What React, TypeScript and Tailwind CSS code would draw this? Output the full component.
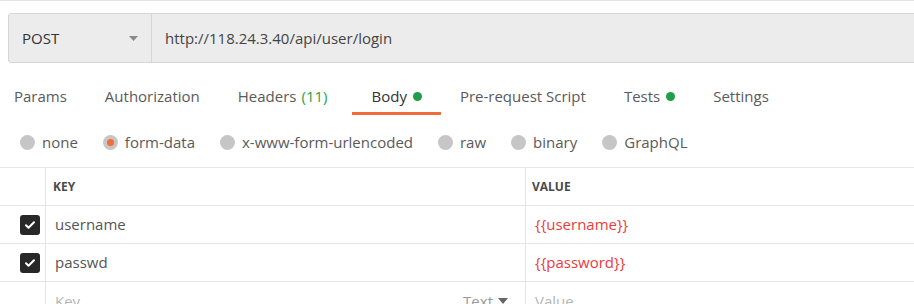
import React from "react";

const TABS = [
  { label: "Params" },
  { label: "Authorization" },
  { label: "Headers", count: "(11)" },
  { label: "Body", dot: true, active: true },
  { label: "Pre-request Script" },
  { label: "Tests", dot: true },
  { label: "Settings" },
];

const MODES = ["none", "form-data", "x-www-form-urlencoded", "raw", "binary", "GraphQL"];

const ROWS = [
  { key: "username", value: "{{username}}" },
  { key: "passwd", value: "{{password}}" },
];

function Check() {
  return (
    <div className="w-[20px] h-[20px] rounded-[3px] bg-[#282828] flex items-center justify-center">
      <svg width="12" height="12" viewBox="0 0 24 24" fill="none" stroke="#fff" strokeWidth="4" strokeLinecap="round" strokeLinejoin="round">
        <path d="M4 12.5l5 5L20 6.5" />
      </svg>
    </div>
  );
}

export default function App() {
  return (
    <div
      className="w-[914px] h-[304px] overflow-hidden bg-white border-t border-[#e3e3e3] text-[#505050]"
      style={{ fontFamily: "'Open Sans', 'Noto Sans', sans-serif" }}
    >
      {/* url bar */}
      <div className="mt-[12px] ml-[8px] w-[930px] h-[50px] flex bg-[#ececec] border border-[#d6d6d6] rounded-[3px]">
        <div className="w-[143px] flex items-center justify-between pl-[13px] pr-[13px] border-r border-[#d6d6d6] flex-shrink-0">
          <span className="text-[15px] text-[#333]">POST</span>
          <svg width="9" height="5" viewBox="0 0 9 5"><path d="M0 0h9L4.5 5z" fill="#8a8a8a" /></svg>
        </div>
        <div className="flex items-center pl-[13px] text-[15px] text-[#444]">http://118.24.3.40/api/user/login</div>
      </div>

      {/* tabs */}
      <div className="flex -ml-[5px] mt-[23px]">
        {TABS.map((t) => (
          <div
            key={t.label}
            className={
              "px-[19px] pb-[6px] flex items-center gap-[5px] text-[15px] leading-[20px] border-b-[3px] " +
              (t.active ? "border-[#f26b3a] text-[#333]" : "border-transparent text-[#5a5a5a]")
            }
          >
            <span>{t.label}</span>
            {t.count && <span className="text-[#26a34b] mr-[6px]">{t.count}</span>}
            {t.dot && <span className="w-[9px] h-[9px] rounded-full bg-[#1f9d49] ml-[1px]" />}
          </div>
        ))}
      </div>

      {/* body modes */}
      <div className="flex items-center gap-[25px] pl-[20px] mt-[17px] h-[20px]">
        {MODES.map((m) => (
          <div key={m} className="flex items-center gap-[7px] text-[15px] leading-[20px] text-[#5a5a5a]">
            <span className="w-[15px] h-[15px] rounded-full bg-[#c6c6c6] flex items-center justify-center">
              {m === "form-data" && <span className="w-[7px] h-[7px] rounded-full bg-[#f26b3a]" />}
            </span>
            <span>{m}</span>
          </div>
        ))}
      </div>

      {/* table */}
      <div className="mt-[15px] border-t border-[#e6e6e6]">
        <div className="flex h-[38px] border-b border-[#e6e6e6]">
          <div className="w-[46px] border-r border-[#e6e6e6] flex-shrink-0" />
          <div className="w-[480px] border-r border-[#e6e6e6] flex items-center pl-[7px] text-[12px] font-bold text-[#4a4a4a]">KEY</div>
          <div className="flex-1 flex items-center pl-[6px] text-[12px] font-bold text-[#4a4a4a]">VALUE</div>
        </div>
        {ROWS.map((r) => (
          <div key={r.key} className="flex h-[38px] border-b border-[#e6e6e6]">
            <div className="w-[46px] border-r border-[#e6e6e6] flex-shrink-0 flex items-center justify-end pr-[5px]">
              <Check />
            </div>
            <div className="w-[480px] border-r border-[#e6e6e6] flex items-center pl-[9px] text-[15px] text-[#555]">{r.key}</div>
            <div className="flex-1 flex items-center pl-[9px] text-[15px] text-[#ec3b3b]">{r.value}</div>
          </div>
        ))}
        <div className="flex h-[38px]">
          <div className="w-[46px] border-r border-[#e6e6e6] flex-shrink-0" />
          <div className="w-[480px] border-r border-[#e6e6e6] flex items-center justify-between pl-[9px] pr-[17px] text-[15px] text-[#b5b5b5]">
            <span>Key</span>
            <span className="flex items-center gap-[5px] text-[#9a9a9a]">
              Text
              <svg width="10" height="6" viewBox="0 0 10 6"><path d="M0 0h10L5 6z" fill="#666" /></svg>
            </span>
          </div>
          <div className="flex-1 flex items-center pl-[9px] text-[15px] text-[#b5b5b5]">Value</div>
        </div>
      </div>
    </div>
  );
}
